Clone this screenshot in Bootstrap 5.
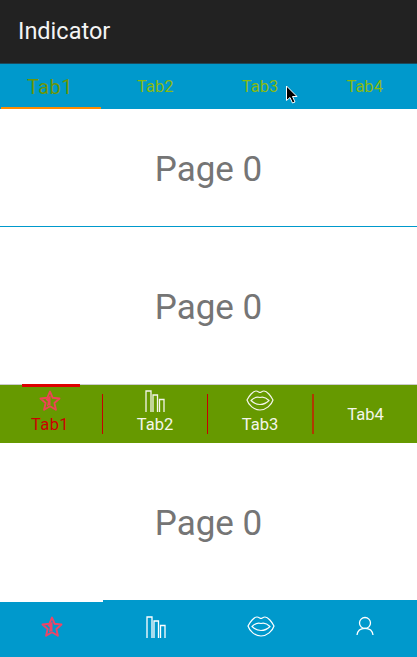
<!DOCTYPE html>
<html lang="en">
<head>
  <meta charset="UTF-8" />
  <meta name="viewport" content="width=device-width, initial-scale=1.0"/>
  <title>Indicator</title>
  <link href="https://cdn.jsdelivr.net/npm/bootstrap@5.3.3/dist/css/bootstrap.min.css" rel="stylesheet">
  <style>
    body{font-family:Roboto,"Liberation Sans",sans-serif;background:#fff;height:657px;overflow:hidden;}
    .app-shell{height:657px;}
    .title-bar{height:64px;background:#222;color:#f4f4f4;font-size:23.5px;padding-left:18px;border-bottom:1px solid #1c4a5c;}
    .top-tabs{height:45px;background:#0099cc;padding:3px 0 2px;}
    .top-tab{flex:1 1 0;color:#88ba12;font-size:16.5px;}
    .top-tab.on{flex:0 0 103px;color:#6c9606;font-size:20px;letter-spacing:.4px;padding-right:3px;}
    .orange-bar{left:1px;bottom:0;width:100px;height:2px;background:#ff8c00;}
    .page-pane{color:#757575;font-size:35px;padding-top:6px;}
    .pane-a{height:118px;border-bottom:1px solid #0099cc;}
    .pane-b{height:158px;border-bottom:1px solid #ccc;}
    .pane-c{height:157px;}
    .green-tabs{height:58px;background:#669900;}
    .green-tab{flex:0 0 104px;color:#f4f6ea;font-size:16.5px;line-height:19px;padding-top:5px;}
    .green-tab svg{height:22px;display:block;margin-bottom:3px;}
    .green-tab.on{flex-basis:102px;color:#cc0000;padding-right:2px;letter-spacing:.4px;}
    .green-tab.plain{flex:1 1 0;padding-top:0;}
    .tab-rule{width:1px;height:40px;margin-top:9px;background:#c80000;flex:none;}
    .tab-rule.rust{background:#b03a00;width:2px;}
    .red-bar{left:22px;top:-1px;width:58px;height:3px;background:#dd0000;}
    .blue-nav{height:57px;background:#0099cc;}
    .nav-cell{flex:1 1 0;padding-top:16px;}
    .white-bar{left:0;top:0;width:103px;height:2px;background:#fff;}
    .mouse-arrow{left:285px;top:85px;}
  </style>
</head>
<body>
<svg width="0" height="0" class="d-block">
  <defs>
    <g id="ic-star" fill="none" stroke="currentColor" stroke-width="1.900" stroke-linejoin="round">
      <path d="M11 1.500 L13.700 7.800 L20.500 8.500 L15.400 13 L16.900 19.800 L11 16.300 L5.100 19.800 L6.600 13 L1.500 8.500 L8.300 7.800 Z"/>
      <path d="M11.500 5.500 L11.500 15 L8 16 L8.800 11.500 L6.500 9.500 Z" fill="currentColor" stroke="none"/>
    </g>
    <g id="ic-bars" fill="none" stroke="currentColor" stroke-width="1.300">
      <path d="M1 22 V1 H6 V22"/>
      <path d="M8 22 V5 H12.500 V22"/>
      <path d="M14.500 22 V9.500 H19 V22"/>
    </g>
    <g id="ic-lips" fill="none" stroke="currentColor" stroke-width="1.200" stroke-linejoin="round">
      <path d="M1 10 C3 6 7 1 10 1 C12 1 13 2.500 14 2.500 C15 2.500 16 1 18 1 C21 1 25 6 27 10 C25.500 15 20 20 14 20 C8 20 2.500 15 1 10 Z"/>
      <path d="M5 10.500 C8 7.500 11 6.500 14 7.500 C17 6.500 20 7.500 23 10.500 C20 13.500 17 14.500 14 14.500 C11 14.500 8 13.500 5 10.500 Z"/>
    </g>
    <g id="ic-person" fill="none" stroke="currentColor" stroke-width="1.300">
      <circle cx="9" cy="7" r="5.500"/>
      <path d="M1 19 C1.500 14.500 4.500 12.300 9 12.300 C13.500 12.300 16.500 14.500 17 19"/>
    </g>
  </defs>
</svg>

<div class="app-shell d-flex flex-column position-relative">
  <div class="title-bar d-flex align-items-center">Indicator</div>

  <div class="top-tabs d-flex position-relative">
    <div class="top-tab on d-flex align-items-center justify-content-center">Tab1</div>
    <div class="top-tab d-flex align-items-center justify-content-center">Tab2</div>
    <div class="top-tab d-flex align-items-center justify-content-center">Tab3</div>
    <div class="top-tab d-flex align-items-center justify-content-center">Tab4</div>
    <div class="orange-bar position-absolute"></div>
  </div>

  <div class="page-pane pane-a d-flex align-items-center justify-content-center">Page 0</div>
  <div class="page-pane pane-b d-flex align-items-center justify-content-center">Page 0</div>

  <div class="green-tabs d-flex position-relative">
    <div class="green-tab on d-flex flex-column align-items-center">
      <svg width="22" viewBox="0 0 22 22" style="color:#ee4455"><use href="#ic-star"/></svg>
      Tab1
    </div>
    <div class="tab-rule"></div>
    <div class="green-tab d-flex flex-column align-items-center">
      <svg width="20" viewBox="0 0 20 22"><use href="#ic-bars"/></svg>
      Tab2
    </div>
    <div class="tab-rule"></div>
    <div class="green-tab d-flex flex-column align-items-center">
      <svg width="28" viewBox="0 0 28 22"><use href="#ic-lips"/></svg>
      Tab3
    </div>
    <div class="tab-rule rust"></div>
    <div class="green-tab plain d-flex align-items-center justify-content-center">Tab4</div>
    <div class="red-bar position-absolute"></div>
  </div>

  <div class="page-pane pane-c d-flex align-items-center justify-content-center">Page 0</div>

  <div class="blue-nav d-flex position-relative text-white">
    <div class="nav-cell d-flex justify-content-center">
      <svg width="22" height="22" viewBox="0 0 22 22" style="color:#ee4466"><use href="#ic-star"/></svg>
    </div>
    <div class="nav-cell d-flex justify-content-center">
      <svg width="20" height="22" viewBox="0 0 20 22"><use href="#ic-bars"/></svg>
    </div>
    <div class="nav-cell d-flex justify-content-center">
      <svg width="28" height="22" viewBox="0 0 28 22"><use href="#ic-lips"/></svg>
    </div>
    <div class="nav-cell d-flex justify-content-center">
      <svg width="18" height="20" viewBox="0 0 18 20"><use href="#ic-person"/></svg>
    </div>
    <div class="white-bar position-absolute"></div>
  </div>

  <svg class="mouse-arrow position-absolute" width="14" height="20" viewBox="0 0 14 20">
    <path d="M1.500 1 V15.500 L5 12.500 L7.500 18 L10 17 L7.500 11.500 L12 11.500 Z" fill="#000" stroke="#fff" stroke-width="1"/>
  </svg>
</div>

<script src="https://cdn.jsdelivr.net/npm/bootstrap@5.3.3/dist/js/bootstrap.bundle.min.js"></script>
</body>
</html>
